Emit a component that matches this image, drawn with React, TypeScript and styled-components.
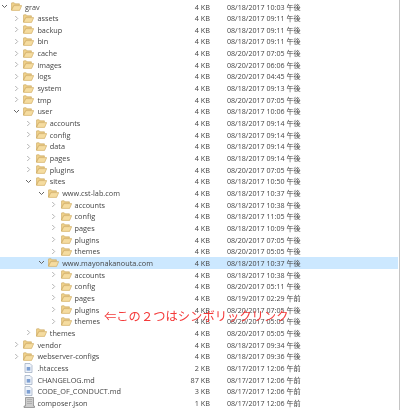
import React from "react";
import styled, { createGlobalStyle } from "styled-components";

const Global = createGlobalStyle`
  html, body { margin: 0; padding: 0; background: #fff; }
  body { width: 400px; height: 410px; overflow: hidden; }
`;

const Page = styled.div`
  position: relative;
  display: flex;
  width: 400px;
  height: 410px;
  overflow: hidden;
  background: #fff;
  font-family: "Open Sans", "Noto Sans CJK JP", sans-serif;
  font-size: 7.3px;
  color: #444;
  filter: blur(0.4px);
`;

const List = styled.div`
  display: flex;
  flex-direction: column;
  padding-top: 0.7px;
  width: 398px;
  flex: none;
`;

const ScrollEdge = styled.div`
  width: 1.3px;
  margin-left: 0.5px;
  background: #c4c4c4;
  flex: none;
`;

const Row = styled.div<{ $selected?: boolean }>`
  display: flex;
  align-items: center;
  height: 11.66px;
  white-space: nowrap;
  background: ${(p) => (p.$selected ? "#cce8ff" : "transparent")};
`;

const NameCell = styled.div<{ $level: number }>`
  display: flex;
  align-items: center;
  width: 190px;
  flex: none;
  padding-left: ${(p) => p.$level * 12.4}px;
  box-sizing: border-box;
`;

const Twisty = styled.span`
  display: flex;
  width: 8px;
  flex: none;
  justify-content: center;
`;

const IconSlot = styled.span`
  display: flex;
  width: 17px;
  flex: none;
  justify-content: center;
`;

const Size = styled.div`
  width: 20px;
  flex: none;
  text-align: right;
`;

const DateCell = styled.div`
  margin-left: 17px;
  font-size: 7.1px;
`;

const Note = styled.div`
  position: absolute;
  left: 104px;
  top: 308.5px;
  font-size: 12.3px;
  line-height: 15px;
  color: #f43a3a;
  white-space: nowrap;
  font-family: "Noto Sans CJK JP", sans-serif;
`;

const Chevron = ({ open }: { open?: boolean }) => (
  <svg width="7" height="7" viewBox="0 0 7 7" fill="none" stroke={open ? "#666" : "#b4b4b4"} strokeWidth="1">
    {open ? <path d="M1 2 L3.5 4.5 L6 2" /> : <path d="M2.2 1 L4.7 3.5 L2.2 6" />}
  </svg>
);

const Folder = () => (
  <svg width="11" height="9" viewBox="0 0 11 9">
    <path d="M0.4 8 V1.4 Q0.4 0.8 1 0.8 H3.2 L4.2 1.8 H8.4 V3.2 H3 Z" fill="#efd08a" stroke="#c8a55c" strokeWidth="0.6" />
    <path d="M0.5 8.4 L2.8 3.6 H10.7 L8.6 8.4 Z" fill="#f5dca0" stroke="#cca658" strokeWidth="0.6" />
  </svg>
);

const FileIcon = () => (
  <svg width="9" height="10" viewBox="0 0 9 10">
    <path d="M1 0.5 H6 L8 2.5 V9.5 H1 Z" fill="#eef3fa" stroke="#9aa8bd" strokeWidth="0.7" />
    <rect x="2.7" y="4" width="3.6" height="3.6" fill="#7d9fd2" />
  </svg>
);

const JsonIcon = () => (
  <svg width="12" height="11" viewBox="0 0 12 11">
    <path d="M2.5 0.5 H10.5 V9 H11.5 V10.5 H1 V9 H2.5 Z" fill="#cdcdcd" stroke="#808080" strokeWidth="0.7" />
    <path d="M4 2.5 H9 M4 4.5 H9 M4 6.5 H9" stroke="#9a9a9a" strokeWidth="0.6" />
  </svg>
);

type Kind = "closed" | "open" | "file" | "json";
type Item = [string, number, Kind, string, string, string];

const items: Item[] = [
  ["grav", 0, "open", "4 KB", "08/18/2017 10:03", "午後"],
  ["assets", 1, "closed", "4 KB", "08/18/2017 09:11", "午後"],
  ["backup", 1, "closed", "4 KB", "08/18/2017 09:11", "午後"],
  ["bin", 1, "closed", "4 KB", "08/18/2017 09:11", "午後"],
  ["cache", 1, "closed", "4 KB", "08/20/2017 07:05", "午後"],
  ["images", 1, "closed", "4 KB", "08/20/2017 06:06", "午後"],
  ["logs", 1, "closed", "4 KB", "08/20/2017 04:45", "午後"],
  ["system", 1, "closed", "4 KB", "08/18/2017 09:13", "午後"],
  ["tmp", 1, "closed", "4 KB", "08/20/2017 07:05", "午後"],
  ["user", 1, "open", "4 KB", "08/18/2017 10:06", "午後"],
  ["accounts", 2, "closed", "4 KB", "08/18/2017 09:14", "午後"],
  ["config", 2, "closed", "4 KB", "08/18/2017 09:14", "午後"],
  ["data", 2, "closed", "4 KB", "08/18/2017 09:14", "午後"],
  ["pages", 2, "closed", "4 KB", "08/18/2017 09:14", "午後"],
  ["plugins", 2, "closed", "4 KB", "08/20/2017 07:05", "午後"],
  ["sites", 2, "open", "4 KB", "08/18/2017 10:50", "午後"],
  ["www.cst-lab.com", 3, "open", "4 KB", "08/18/2017 10:37", "午後"],
  ["accounts", 4, "closed", "4 KB", "08/18/2017 10:38", "午後"],
  ["config", 4, "closed", "4 KB", "08/18/2017 11:05", "午後"],
  ["pages", 4, "closed", "4 KB", "08/18/2017 10:09", "午後"],
  ["plugins", 4, "closed", "4 KB", "08/20/2017 07:05", "午後"],
  ["themes", 4, "closed", "4 KB", "08/20/2017 05:05", "午後"],
  ["www.mayonakanouta.com", 3, "open", "4 KB", "08/18/2017 10:37", "午後"],
  ["accounts", 4, "closed", "4 KB", "08/18/2017 10:38", "午後"],
  ["config", 4, "closed", "4 KB", "08/20/2017 05:11", "午後"],
  ["pages", 4, "closed", "4 KB", "08/19/2017 02:29", "午前"],
  ["plugins", 4, "closed", "4 KB", "08/20/2017 07:05", "午後"],
  ["themes", 4, "closed", "4 KB", "08/20/2017 05:05", "午後"],
  ["themes", 2, "closed", "4 KB", "08/20/2017 05:05", "午後"],
  ["vendor", 1, "closed", "4 KB", "08/18/2017 09:34", "午後"],
  ["webserver-configs", 1, "closed", "4 KB", "08/18/2017 09:36", "午後"],
  [".htaccess", 1, "file", "2 KB", "08/17/2017 12:06", "午前"],
  ["CHANGELOG.md", 1, "file", "87 KB", "08/17/2017 12:06", "午前"],
  ["CODE_OF_CONDUCT.md", 1, "file", "3 KB", "08/17/2017 12:06", "午前"],
  ["composer.json", 1, "json", "1 KB", "08/17/2017 12:06", "午前"],
];

export default function App() {
  return (
    <>
      <Global />
      <Page>
        <List>
          {items.map(([name, level, kind, size, date, ampm], i) => (
            <Row key={i} $selected={i === 22}>
              <NameCell $level={level}>
                <Twisty>
                  {kind === "open" && <Chevron open />}
                  {kind === "closed" && <Chevron />}
                </Twisty>
                <IconSlot>
                  {(kind === "open" || kind === "closed") && <Folder />}
                  {kind === "file" && <FileIcon />}
                  {kind === "json" && <JsonIcon />}
                </IconSlot>
                <span>{name}</span>
              </NameCell>
              <Size>{size}</Size>
              <DateCell>
                {date} {ampm}
              </DateCell>
            </Row>
          ))}
        </List>
        <ScrollEdge />
        <Note>⇐この２つはシンボリックリンク</Note>
      </Page>
    </>
  );
}
